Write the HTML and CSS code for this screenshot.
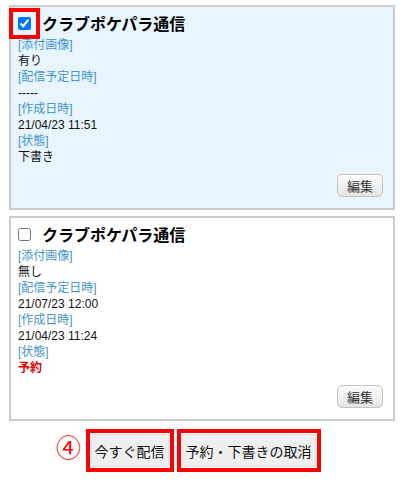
FILE: index.html
```html
<!DOCTYPE html>
<html lang="ja">
<head>
    <meta charset="UTF-8">
    <meta name="viewport" content="width=device-width, initial-scale=1.0">
    <title>配信一覧</title>
    <link rel="stylesheet" href="styles.css">
</head>
<body>

    <div class="card selected">
        <div class="head">
            <input type="checkbox" class="marked" checked>
            <span class="title">クラブポケパラ通信</span>
        </div>
        <div class="info">
            <div class="label">[添付画像]</div>
            <div>有り</div>
            <div class="label">[配信予定日時]</div>
            <div>-----</div>
            <div class="label">[作成日時]</div>
            <div>21/04/23 11:51</div>
            <div class="label">[状態]</div>
            <div>下書き</div>
        </div>
        <div class="actions">
            <button class="edit">編集</button>
        </div>
    </div>

    <div class="card">
        <div class="head">
            <input type="checkbox">
            <span class="title">クラブポケパラ通信</span>
        </div>
        <div class="info">
            <div class="label">[添付画像]</div>
            <div>無し</div>
            <div class="label">[配信予定日時]</div>
            <div>21/07/23 12:00</div>
            <div class="label">[作成日時]</div>
            <div>21/04/23 11:24</div>
            <div class="label">[状態]</div>
            <div class="reserved">予約</div>
        </div>
        <div class="actions">
            <button class="edit">編集</button>
        </div>
    </div>

    <div class="bottom">
        <span class="step">④</span>
        <span class="mark"><button class="big">今すぐ配信</button></span>
        <span class="mark"><button class="big">予約・下書きの取消</button></span>
    </div>

</body>
</html>
```

FILE: styles.css
```css
body { margin: 0; padding: 5px 7px 0 9px; font-family: "Liberation Sans", "Noto Sans CJK JP", sans-serif; color: #111; background: #fff; }
.card { border: 2px solid #ccc; padding: 5px 10px 11px 7px; margin-bottom: 6px; background: #fff; }
.card.selected { background: #e9f5fe; }
.head { display: flex; align-items: center; height: 22px; margin-bottom: 3px; }
.head input { width: 13px; height: 13px; margin: 0 11px 0 0; }
.head input.marked { outline: 4px solid #f00; outline-offset: 5px; }
.title { font-family: "Noto Sans CJK JP", sans-serif; font-size: 16px; font-weight: bold; color: #000; }
.info { font-size: 12px; line-height: 16px; }
.label { color: #3f95cc; }
.reserved { color: #e00000; font-weight: bold; }
.actions { display: flex; justify-content: flex-end; margin-top: 9px; }
.edit { height: 23px; padding: 0 9px; font-family: "Noto Sans CJK JP", sans-serif; font-size: 13px; color: #333; background: linear-gradient(#fdfdfd, #e4e4e4); border: 1px solid #c4c4c4; border-radius: 5px; }
.bottom { position: relative; display: flex; justify-content: center; gap: 3px; margin-top: 8px; padding-left: 2px; }
.step { position: absolute; left: 47px; top: 2px; font-family: "Noto Sans CJK JP", sans-serif; font-size: 25px; line-height: 30px; color: #f00; }
.mark { display: block; border: 4px solid #f00; padding: 1px; }
.big { display: block; height: 33px; padding: 0 3px; font-family: "Noto Sans CJK JP", sans-serif; font-size: 14px; color: #111; background: #efefef; border: 1px solid #e2e2e2; border-radius: 2px; }
```
